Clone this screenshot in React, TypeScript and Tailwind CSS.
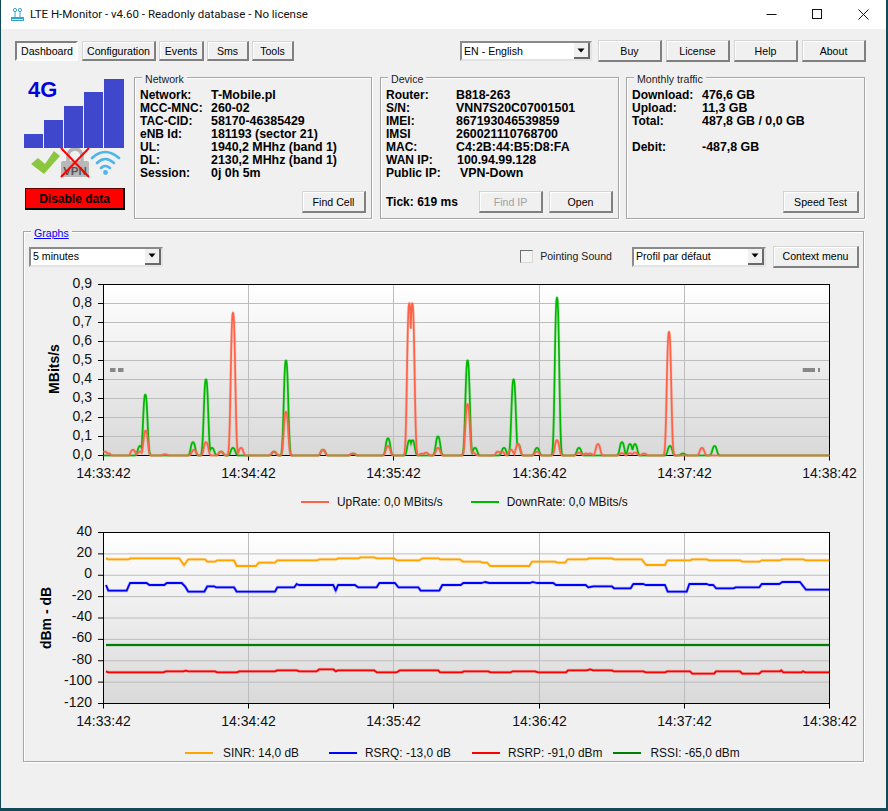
import React from "react";

type Pt = [number, number];

const WIN_BTN =
  "flex items-center justify-center pt-[2px] bg-[#f0f0f0] border border-[#d4d4d4] border-r-[#808080] border-b-[#808080] border-r-2 border-b-2 shadow-[inset_1px_1px_0_#ffffff] text-[10.6px]";

function Btn({ w, h = 22, children, disabled }: { w: string; h?: number; children: React.ReactNode; disabled?: boolean }) {
  return (
    <div className={`${WIN_BTN} ${w} ${h === 20 ? "h-[20px]" : "h-[22px]"} ${disabled ? "text-[#a0a0a0]" : "text-black"}`}>
      {children}
    </div>
  );
}

function Combo({ w, text }: { w: string; text: string }) {
  return (
    <div className={`${w} h-[20px] flex items-center bg-white border-2 border-[#8a8a8a] border-r-[#e4e4e4] border-b-[#e4e4e4] text-[10.6px] text-black`}>
      <span className="pl-[2px] pt-[1px] flex-1 whitespace-nowrap">{text}</span>
      <div className="w-[16px] h-[16px] flex items-center justify-center bg-[#f0f0f0] border-r-2 border-b-2 border-[#696969]">
        <svg width="8" height="5" viewBox="0 0 8 5"><path d="M0.5 0.5H7.5L4 4.5Z" fill="#000" /></svg>
      </div>
    </div>
  );
}

function Group({ title, className, children }: { title: React.ReactNode; className: string; children?: React.ReactNode }) {
  return (
    <div className={`relative border border-[#a6a6a6] shadow-[1px_1px_0_#ffffff,inset_1px_1px_0_#ffffff] ${className}`}>
      <span className="absolute -top-[5px] left-[7px] px-[3px] bg-[#f0f0f0] text-[10.6px] leading-[13px] text-[#222]">{title}</span>
      {children}
    </div>
  );
}

function Rows({ rows }: { rows: [string, string, string?][] }) {
  return (
    <div className="pt-[11px] pl-[5px] leading-[13px] font-bold text-black">
      {rows.map(([a, b, c], i) => (
        <div key={i} className="flex h-[13px] whitespace-nowrap">
          <span className="w-[70px] text-[12px]">{a}</span>
          <span className={`text-[12.4px] ${c ?? ""}`}>{b}</span>
        </div>
      ))}
    </div>
  );
}

const greenPeaks: Pt[] = [
  [140, 0.05], [145.3, 0.32], [193, 0.07], [206, 0.4], [212, 0.04], [221, 0.02], [233, 0.04], [274, 0.02], [286, 0.5],
  [323, 0.03], [353, 0.01], [388, 0.09], [409.5, 0.08], [412.5, 0.08], [438, 0.1], [467.6, 0.5], [475, 0.04], [504, 0.04],
  [513.6, 0.4], [518, 0.06], [537, 0.04], [557, 0.83], [579, 0.04], [622, 0.07], [630, 0.06], [635, 0.06], [670, 0.05],
  [683, 0.01], [714.6, 0.05],
];
const redPeaks: Pt[] = [
  [105, 0.02], [108, 0.012], [133, 0.03], [140, 0.02], [145.6, 0.13], [165, 0.006], [194, 0.03], [206, 0.07], [221, 0.02],
  [233, 0.75], [241, 0.04], [274, 0.02], [286, 0.23], [323, 0.03], [353, 0.01], [388, 0.05], [409.3, 0.8], [412.3, 0.8],
  [422, 0.01], [426, 0.015], [438, 0.04], [467.6, 0.27], [473, 0.015], [498, 0.02], [502, 0.02], [511, 0.03], [518, 0.06],
  [537, 0.02], [557, 0.08], [579, 0.015], [586, 0.01], [590, 0.01], [598, 0.06], [622, 0.012], [630, 0.012], [635, 0.015], [644, 0.01],
  [669, 0.65], [702, 0.04],
];

function peakPath(peaks: Pt[]) {
  const pts: string[] = [];
  for (let x = 103.5; x <= 829.5; x += 0.25) {
    let v = 0;
    for (const [c, a] of peaks) {
      const d = Math.abs(x - c) / 2.8;
      if (d < 4) v = Math.max(v, a * Math.exp(-Math.pow(d, 2.6)));
    }
    pts.push(`${(x - 30).toFixed(2)},${(180.5 - v * 190).toFixed(2)}`);
  }
  return pts.join(" ");
}

const z = (arr: Pt[], base: number): Pt[] => arr.map(([x, y]) => [base + x / 3 - 30, y / 3 + 3]);

const sinr: Pt[] = [
  ...z([[228,100],[235,103],[295,103],[302,100],[448,100],[462,121],[475,103],[525,103],[532,110],[555,110],[562,106],[612,106],[620,123],[678,123],[686,113],[735,113],[742,106],[860,106],[868,103],[918,103],[925,100],[985,100],[992,97],[1032,97],[1040,100],[1092,100],[1100,106],[1168,106],[1178,100],[1225,100]], 30),
  ...z([[0,103],[60,103],[68,110],[120,110],[128,113],[142,113],[150,123],[268,123],[276,110],[345,110],[352,113],[375,113],[383,103],[440,103],[447,100],[515,100],[522,103],[605,103],[618,120],[675,120],[682,106],[750,106],[757,103],[800,103],[807,106],[900,106],[907,110],[958,110],[965,106],[1020,106],[1027,103],[1090,103],[1098,106],[1168,106]], 440),
];
const rsrq: Pt[] = [
  ...z([[228,180],[235,197],[290,197],[300,174],[350,174],[358,180],[403,180],[410,174],[455,174],[465,184],[475,200],[523,200],[532,184],[552,184],[558,187],[612,187],[620,200],[735,200],[742,187],[793,187],[800,177],[806,180],[910,180],[917,197],[924,180],[975,180],[984,187],[1040,187],[1048,174],[1095,174],[1105,187],[1165,187],[1172,197],[1228,197]], 30),
  ...z([[7,180],[62,180],[70,174],[125,174],[135,171],[148,174],[270,174],[278,171],[290,174],[340,174],[348,180],[437,180],[445,187],[460,184],[515,184],[522,190],[572,190],[580,177],[610,177],[617,180],[675,180],[683,200],[740,200],[748,177],[800,177],[808,180],[820,180],[828,190],[880,190],[887,187],[958,187],[965,177],[1018,177],[1027,171],[1080,171],[1098,194],[1168,194]], 440),
];
const rsrp: Pt[] = [
  ...z([[228,439],[235,442],[400,442],[408,439],[460,439],[467,437],[475,439],[555,439],[562,442],[620,442],[628,439],[735,439],[742,436],[800,436],[808,439],[860,439],[868,433],[910,433],[917,439],[924,436],[1032,436],[1040,442],[1100,442],[1110,436],[1225,436]], 30),
  ...z([[0,442],[65,442],[72,439],[145,439],[152,442],[212,442],[218,439],[285,439],[295,442],[378,442],[385,436],[440,436],[450,433],[460,436],[515,436],[522,439],[610,439],[618,442],[675,442],[682,439],[750,439],[757,446],[822,446],[828,439],[900,439],[907,446],[958,446],[965,439],[1020,439],[1024,436],[1030,442],[1085,442],[1089,439],[1095,442],[1168,442]], 440),
];
const rssi: Pt[] = z([[228,360]], 30).concat(z([[1168,360]], 440));

const pl = (a: Pt[]) => a.map(([x, y]) => `${x.toFixed(1)},${y.toFixed(1)}`).join(" ");

const XT = [73.5, 218.5, 363.5, 509.5, 654.5, 799.5];
const XL = ["14:33:42", "14:34:42", "14:35:42", "14:36:42", "14:37:42", "14:38:42"];

function Axes({
  id, top, bottom, labels, title, titleX, titleY, xBase,
}: { id: string; top: number; bottom: number; labels: string[]; title: string; titleX: number; titleY: number; xBase: number }) {
  const n = labels.length - 1;
  const step = (bottom - top) / n;
  return (
    <>
      <defs>
        <linearGradient id={id} x1="0" y1="0" x2="0" y2="1">
          <stop offset="0" stopColor="#ffffff" />
          <stop offset="1" stopColor="#d9d9d9" />
        </linearGradient>
      </defs>
      <rect x={73.5} y={top} width={726} height={bottom - top} fill={`url(#${id})`} />
      {labels.map((_, i) =>
        i > 0 && i < n ? (
          <line key={i} x1={73.5} x2={799.5} y1={top + i * step} y2={top + i * step} stroke="#bdbdbd" strokeWidth="1" />
        ) : null
      )}
      {XT.slice(1, 5).map((x) => (
        <line key={x} x1={x} x2={x} y1={top} y2={bottom} stroke="#bdbdbd" strokeWidth="1" />
      ))}
      <rect x={73.5} y={top} width={726} height={bottom - top} fill="none" stroke="#000" strokeWidth="1" />
      {XT.map((x) => (
        <line key={x} x1={x} x2={x} y1={bottom} y2={bottom + 5} stroke="#000" strokeWidth="1" />
      ))}
      {labels.map((l, i) => (
        <g key={l}>
          <line x1={68} x2={73.5} y1={top + i * step} y2={top + i * step} stroke="#000" strokeWidth="1" />
          <text x={62} y={top + i * step + 3} textAnchor="end" fontSize="14" fill="#111">{l}</text>
        </g>
      ))}
      {XT.map((x, i) => (
        <text key={x} x={x} y={xBase} textAnchor="middle" fontSize="14" fill="#111">{XL[i]}</text>
      ))}
      <text
        transform={`translate(${titleX} ${titleY}) rotate(-90)`}
        textAnchor="middle"
        fontSize="14"
        fontWeight="700"
        fill="#000"
      >
        {title}
      </text>
    </>
  );
}

function RateChart() {
  const labels = ["0,9", "0,8", "0,7", "0,6", "0,5", "0,4", "0,3", "0,2", "0,1", "0,0"];
  const g = peakPath(greenPeaks);
  const r = peakPath(redPeaks);
  return (
    <svg width="830" height="215" viewBox="0 0 830 215" className="block">
      <Axes id="gr1" top={9.5} bottom={180.5} labels={labels} title="MBits/s" titleX={29} titleY={94} xBase={203} />
      <polyline points={g} fill="none" stroke="#00b800" strokeWidth="3" opacity="0.2" />
      <polyline points={g} fill="none" stroke="#00b800" strokeWidth="1.7" />
      <polyline points={r} fill="none" stroke="#ff6347" strokeWidth="3" opacity="0.25" />
      <polyline points={r} fill="none" stroke="#ff6347" strokeWidth="1.7" />
      <rect x={80} y={93} width={5.5} height={4} fill="#888" />
      <rect x={88} y={93} width={5.5} height={4} fill="#888" />
      <rect x={772.7} y={93} width={12.3} height={4} fill="#888" />
      <rect x={788} y={93} width={2} height={4} fill="#888" />
    </svg>
  );
}

function SignalChart() {
  const labels = ["40", "20", "0", "-20", "-40", "-60", "-80", "-100", "-120"];
  const S = ({ p, c }: { p: Pt[]; c: string }) => (
    <>
      <polyline points={pl(p)} fill="none" stroke={c} strokeWidth="3" opacity="0.25" />
      <polyline points={pl(p)} fill="none" stroke={c} strokeWidth="1.8" strokeLinejoin="round" />
    </>
  );
  return (
    <svg width="830" height="219" viewBox="0 0 830 219" className="block">
      <Axes id="gr2" top={10.5} bottom={181.5} labels={labels} title="dBm - dB" titleX={20.7} titleY={96} xBase={204} />
      <S p={rssi} c="#008000" />
      <S p={rsrp} c="#ff0000" />
      <S p={rsrq} c="#0000ff" />
      <S p={sinr} c="#ffa500" />
    </svg>
  );
}

function LegendItem({ color, label, className, labelMl = "ml-[8px]" }: { color: string; label: string; className?: string; labelMl?: string }) {
  return (
    <div className={`flex items-center ${className ?? ""}`}>
      <span className={`block w-[28px] h-[2.5px] ${color}`} />
      <span className={`${labelMl} text-[11.9px] leading-[16px] text-[#111] whitespace-nowrap`}>{label}</span>
    </div>
  );
}

function SignalBars() {
  const bars = ["h-[14px]", "h-[28px]", "h-[42px]", "h-[56px]", "h-[69px]"];
  const widths = ["w-[19px]", "w-[19px]", "w-[19px]", "w-[19px]", "w-[20px]"];
  return (
    <div className="relative h-[70px] ml-[-1px] flex items-end gap-[1px]">
      {bars.map((h, i) => (
        <div key={i} className={`${h} ${widths[i]} bg-[#3f48cc]`} />
      ))}
      <span className="absolute left-[4px] top-[1px] text-[22px] leading-[21px] font-bold text-[#0000d8]">4G</span>
    </div>
  );
}

function StatusIcons() {
  return (
    <svg width="92" height="30" viewBox="0 0 92 30" className="block ml-[4px]">
      <path d="M2 16 L9 10 L16 16 L25 3 L31 8 L15 26 Z" fill="#8cc63f" />
      <g>
        <path d="M39 13 V8 a7 7 0 0 1 14 0 V13" fill="none" stroke="#b4b4b4" strokeWidth="3.5" />
        <rect x="32" y="13" width="28" height="16" rx="2" fill="#b8b8b8" />
        <text x="46" y="27" textAnchor="middle" fontSize="11.5" fontWeight="700" fill="#555">VPN</text>
        <path d="M32 0 L60 29 M60 0 L32 29" stroke="#ff0000" strokeWidth="2" />
      </g>
      <g fill="none" stroke="#4fb4ea" strokeWidth="2.6" strokeLinecap="round">
        <path d="M63 10 Q76 -2 90 10" />
        <path d="M68 15 Q76 7 85 15" />
        <path d="M72 20 Q76 16 81 20" />
      </g>
      <circle cx="76.5" cy="24.5" r="2.4" fill="#4fb4ea" />
    </svg>
  );
}

function AppIcon() {
  return (
    <svg width="14" height="16" viewBox="0 0 14 16" className="block">
      <rect x="0" y="10" width="13" height="4" fill="#37a4c8" />
      <rect x="1" y="12" width="11" height="1" fill="#bfe6f2" />
      <path d="M4 4V10M9 4V10" stroke="#37a4c8" strokeWidth="1" />
      <circle cx="4" cy="3" r="1.6" fill="none" stroke="#37a4c8" />
      <circle cx="9" cy="3" r="1.6" fill="none" stroke="#37a4c8" />
    </svg>
  );
}

export default function App() {
  return (
    <div className="w-[888px] h-[811px] bg-[#11495a] pl-px pr-[2px] pb-[3px] [font-family:'Liberation_Sans',Arial,sans-serif] overflow-hidden">
      <div className="h-full bg-[#f0f0f0] flex flex-col">
        {/* Title bar */}
        <div className="h-[29px] bg-white flex items-center shrink-0">
          <div className="ml-[10px] mr-[5px]"><AppIcon /></div>
          <span className="text-[11.5px] text-[#111] whitespace-nowrap [font-family:Roboto,sans-serif]">
            LTE H-Monitor - v4.60 - Readonly database - No license
          </span>
          <div className="ml-auto flex h-full">
            <div className="w-[46px] flex items-center justify-center">
              <svg width="11" height="11" viewBox="0 0 11 11"><path d="M0.5 5.5H10.5" stroke="#111" /></svg>
            </div>
            <div className="w-[46px] flex items-center justify-center">
              <svg width="11" height="11" viewBox="0 0 11 11"><rect x="0.5" y="0.5" width="9" height="9" fill="none" stroke="#111" /></svg>
            </div>
            <div className="w-[46px] flex items-center justify-center">
              <svg width="11" height="11" viewBox="0 0 11 11"><path d="M0.5 0.5L10.5 10.5M10.5 0.5L0.5 10.5" stroke="#111" /></svg>
            </div>
          </div>
        </div>

        {/* Toolbar */}
        <div className="mt-[11px] ml-[14px] mr-[20px] h-[22px] flex items-center shrink-0">
          <div className="flex items-center">
            <div className="w-[63px] h-[20px] flex items-center justify-center pt-[2px] pl-[1px] text-[10.6px] text-black border-2 border-[#808080] border-r-white border-b-white bg-[#f8f8f8]">
              Dashboard
            </div>
            <Btn w="w-[74px] ml-[4px]" h={20}>Configuration</Btn>
            <Btn w="w-[45px] ml-[3px]" h={20}>Events</Btn>
            <Btn w="w-[42px] ml-[3px]" h={20}>Sms</Btn>
            <Btn w="w-[42px] ml-[3px]" h={20}>Tools</Btn>
          </div>
          <div className="ml-auto flex items-center">
            <Combo w="w-[132px]" text="EN - English" />
            <Btn w="w-[64px] ml-[6px]">Buy</Btn>
            <Btn w="w-[64px] ml-[4px]">License</Btn>
            <Btn w="w-[64px] ml-[4px]">Help</Btn>
            <Btn w="w-[64px] ml-[4px]">About</Btn>
          </div>
        </div>

        {/* Info row */}
        <div className="mt-[15px] ml-[24px] flex h-[142px] shrink-0">
          <div className="w-[109px] pt-[1px] flex flex-col">
            <SignalBars />
            <StatusIcons />
            <div className="mt-[10px] w-[100px] h-[22px] flex items-center justify-center bg-[#ff0000] border border-[#600000] border-r-black border-b-black border-r-2 border-b-2 text-[12px] font-bold text-black">
              Disable data
            </div>
          </div>

          <Group title="Network" className="w-[238px] h-full flex flex-col">
            <Rows
              rows={[
                ["Network:", "T-Mobile.pl", "ml-[1px]"],
                ["MCC-MNC:", "260-02", "ml-[1px]"],
                ["TAC-CID:", "58170-46385429", "ml-[1px]"],
                ["eNB Id:", "181193 (sector 21)", "ml-[1px]"],
                ["UL:", "1940,2 MHhz (band 1)", "ml-[1px]"],
                ["DL:", "2130,2 MHhz (band 1)", "ml-[1px]"],
                ["Session:", "0j 0h 5m", "ml-[1px]"],
              ]}
            />
            <div className="mt-auto mb-[5px] mr-[5px] flex justify-end">
              <Btn w="w-[64px]">Find Cell</Btn>
            </div>
          </Group>

          <Group title="Device" className="w-[239px] h-full ml-[8px] flex flex-col">
            <Rows
              rows={[
                ["Router:", "B818-263"],
                ["S/N:", "VNN7S20C07001501"],
                ["IMEI:", "867193046539859"],
                ["IMSI", "260021110768700"],
                ["MAC:", "C4:2B:44:B5:D8:FA"],
                ["WAN IP:", "100.94.99.128", "ml-[1px]"],
                ["Public IP:", "VPN-Down", "ml-[4px]"],
              ]}
            />
            <div className="mt-auto mb-[5px] mx-[5px] flex items-center">
              <span className="text-[12px] font-bold text-black whitespace-nowrap">Tick: 619 ms</span>
              <div className="ml-auto flex gap-[6px]">
                <Btn w="w-[64px]" disabled>Find IP</Btn>
                <Btn w="w-[64px]">Open</Btn>
              </div>
            </div>
          </Group>

          <Group title="Monthly traffic" className="w-[239px] h-full ml-[7px] flex flex-col">
            <Rows
              rows={[
                ["Download:", "476,6 GB"],
                ["Upload:", "11,3 GB"],
                ["Total:", "487,8 GB / 0,0 GB"],
                ["", ""],
                ["Debit:", "-487,8 GB"],
              ]}
            />
            <div className="mt-auto mb-[5px] mr-[5px] flex justify-end">
              <Btn w="w-[76px]">Speed Test</Btn>
            </div>
          </Group>
        </div>

        {/* Graphs */}
        <Group
          title={<span className="text-[#0000ff] underline">Graphs</span>}
          className="mt-[12px] ml-[22px] w-[841px] h-[531px] px-[6px] pt-[14px] shrink-0"
        >
          <div className="h-[21px] flex items-center">
            <Combo w="w-[134px] ml-[-1px]" text="5 minutes" />
            <div className="ml-auto flex items-center">
              <div className="w-[13px] h-[13px] border border-[#707070] border-r-[#d8d8d8] border-b-[#d8d8d8] bg-[#f4f4f4]" />
              <span className="ml-[7px] text-[10.6px] text-[#222] whitespace-nowrap">Pointing Sound</span>
              <Combo w="w-[134px] ml-[20px]" text="Profil par défaut" />
              <Btn w="w-[86px] ml-[7px] mr-[-2px]">Context menu</Btn>
            </div>
          </div>
          <div className="mt-[8px]"><RateChart /></div>
          <div className="h-[24px] flex items-center pl-[271px]">
            <LegendItem color="bg-[#ff6347]" label="UpRate: 0,0 MBits/s" />
            <LegendItem color="bg-[#00b800]" label="DownRate: 0,0 MBits/s" className="ml-[28px]" />
          </div>
          <div className="mt-[8px]"><SignalChart /></div>
          <div className="h-[24px] flex items-center pl-[155px]">
            <LegendItem color="bg-[#ffa500]" label="SINR: 14,0 dB" labelMl="ml-[10px]" />
            <LegendItem color="bg-[#0000ff]" label="RSRQ: -13,0 dB" className="ml-[30px]" />
            <LegendItem color="bg-[#ff0000]" label="RSRP: -91,0 dBm" className="ml-[21px]" />
            <LegendItem color="bg-[#008000]" label="RSSI: -65,0 dBm" className="ml-[11px]" labelMl="ml-[9px]" />
          </div>
        </Group>
      </div>
    </div>
  );
}
